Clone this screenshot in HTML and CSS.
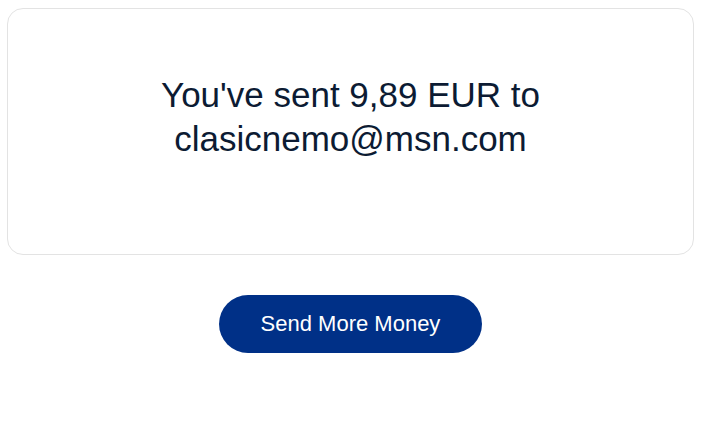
FILE: index.html
```html
<!DOCTYPE html>
<html>
<head>
<meta charset="utf-8">
<link rel="stylesheet" href="styles.css">
</head>
<body>
<div class="page">
  <div class="card">
    <p class="message">You've sent 9,89 EUR to clasicnemo@msn.com</p>
  </div>
  <div class="actions">
    <button class="btn">Send More Money</button>
  </div>
</div>
</body>
</html>
```
FILE: styles.css
```css
html, body {
  margin: 0;
  padding: 0;
  background: #fff;
  font-family: "Liberation Sans", Arial, sans-serif;
}
.page {
  padding: 8px 0 0 7px;
  width: 687px;
}
.card {
  box-sizing: border-box;
  width: 687px;
  height: 247px;
  padding-top: 64px;
  border: 1px solid #e3e3e3;
  border-radius: 16px;
  display: flex;
  justify-content: center;
  align-items: flex-start;
}
.message {
  margin: 0;
  width: 460px;
  text-align: center;
  font-size: 35px;
  line-height: 44px;
  color: #0c1b33;
}
.actions {
  display: flex;
  justify-content: center;
  margin-top: 40px;
}
.btn {
  width: 263px;
  height: 58px;
  border: none;
  border-radius: 29px;
  background: #003087;
  color: #fff;
  font-family: "Liberation Sans", Arial, sans-serif;
  font-size: 22px;
  cursor: pointer;
}
```
